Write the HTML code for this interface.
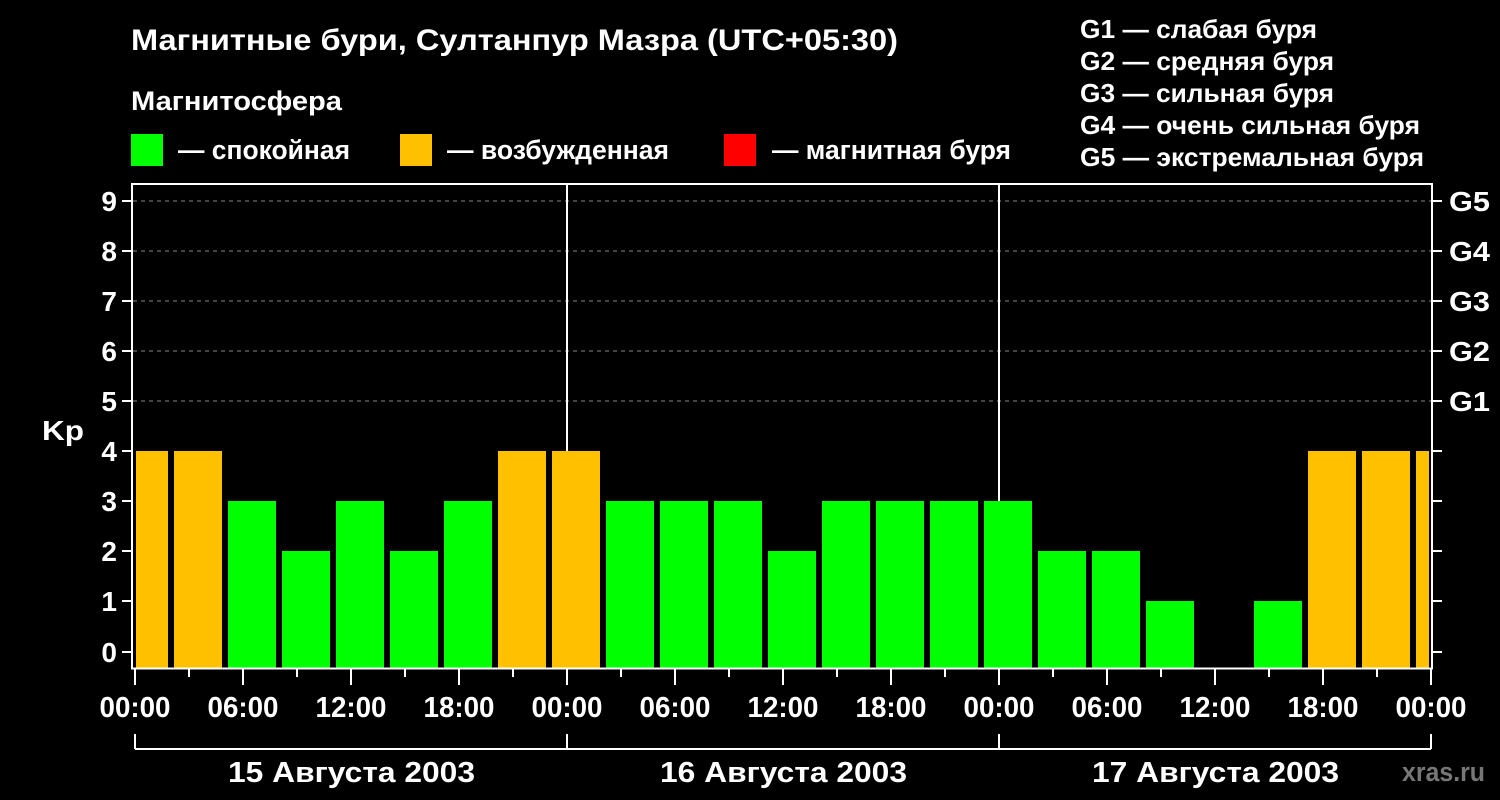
<!DOCTYPE html>
<html><head><meta charset="utf-8"><style>
html,body{margin:0;padding:0;background:#000;}
svg{display:block;font-family:"Liberation Sans",sans-serif;font-weight:bold;}
</style></head><body>
<svg width="1500" height="800" viewBox="0 0 1500 800" xmlns="http://www.w3.org/2000/svg">
<rect width="1500" height="800" fill="#000"/>
<g fill="#fff">
<text x="131" y="50" font-size="30" textLength="767" lengthAdjust="spacingAndGlyphs">Магнитные бури, Султанпур Мазра (UTC+05:30)</text>
<text x="131" y="110" font-size="27" textLength="211" lengthAdjust="spacingAndGlyphs">Магнитосфера</text>
<text x="178" y="159" font-size="27" textLength="172" lengthAdjust="spacingAndGlyphs">— спокойная</text>
<text x="447" y="159" font-size="27" textLength="222" lengthAdjust="spacingAndGlyphs">— возбужденная</text>
<text x="772" y="159" font-size="27" textLength="239" lengthAdjust="spacingAndGlyphs">— магнитная буря</text>
<text x="1080" y="38" font-size="26" textLength="237" lengthAdjust="spacingAndGlyphs">G1 — слабая буря</text>
<text x="1080" y="70" font-size="26" textLength="254" lengthAdjust="spacingAndGlyphs">G2 — средняя буря</text>
<text x="1080" y="102" font-size="26" textLength="254" lengthAdjust="spacingAndGlyphs">G3 — сильная буря</text>
<text x="1080" y="134" font-size="26" textLength="340" lengthAdjust="spacingAndGlyphs">G4 — очень сильная буря</text>
<text x="1080" y="166" font-size="26" textLength="344" lengthAdjust="spacingAndGlyphs">G5 — экстремальная буря</text>
</g>
<rect x="131" y="134" width="32" height="32" fill="#00ff00"/>
<rect x="400" y="134" width="32" height="32" fill="#ffc000"/>
<rect x="724" y="134" width="32" height="32" fill="#ff0000"/>
<g stroke="#888" stroke-width="1" stroke-dasharray="4,4">
<line x1="133" y1="201" x2="1431" y2="201"/><line x1="133" y1="251" x2="1431" y2="251"/>
<line x1="133" y1="301" x2="1431" y2="301"/><line x1="133" y1="351" x2="1431" y2="351"/>
<line x1="133" y1="401" x2="1431" y2="401"/>
</g>
<g id="bars">
<rect x="136" y="451" width="32" height="217" fill="#ffc000"/>
<rect x="174" y="451" width="48" height="217" fill="#ffc000"/>
<rect x="228" y="501" width="48" height="167" fill="#00ff00"/>
<rect x="282" y="551" width="48" height="117" fill="#00ff00"/>
<rect x="336" y="501" width="48" height="167" fill="#00ff00"/>
<rect x="390" y="551" width="48" height="117" fill="#00ff00"/>
<rect x="444" y="501" width="48" height="167" fill="#00ff00"/>
<rect x="498" y="451" width="48" height="217" fill="#ffc000"/>
<rect x="552" y="451" width="48" height="217" fill="#ffc000"/>
<rect x="606" y="501" width="48" height="167" fill="#00ff00"/>
<rect x="660" y="501" width="48" height="167" fill="#00ff00"/>
<rect x="714" y="501" width="48" height="167" fill="#00ff00"/>
<rect x="768" y="551" width="48" height="117" fill="#00ff00"/>
<rect x="822" y="501" width="48" height="167" fill="#00ff00"/>
<rect x="876" y="501" width="48" height="167" fill="#00ff00"/>
<rect x="930" y="501" width="48" height="167" fill="#00ff00"/>
<rect x="984" y="501" width="48" height="167" fill="#00ff00"/>
<rect x="1038" y="551" width="48" height="117" fill="#00ff00"/>
<rect x="1092" y="551" width="48" height="117" fill="#00ff00"/>
<rect x="1146" y="601" width="48" height="67" fill="#00ff00"/>
<rect x="1254" y="601" width="48" height="67" fill="#00ff00"/>
<rect x="1308" y="451" width="48" height="217" fill="#ffc000"/>
<rect x="1362" y="451" width="48" height="217" fill="#ffc000"/>
<rect x="1416" y="451" width="13" height="217" fill="#ffc000"/>
</g>
<g stroke="#fff" stroke-width="2" fill="none">
<polyline points="132,668 132,184 1432,184 1432,668"/>
<line x1="131" y1="668.5" x2="1433" y2="668.5"/>
<line x1="567" y1="183" x2="567" y2="451"/>
<line x1="999" y1="183" x2="999" y2="501"/>
<path d="M122 201h9M122 251h9M122 301h9M122 351h9M122 401h9M122 451h9M122 501h9M122 551h9M122 601h9M122 652h9"/>
<path d="M1433 201h9M1433 251h9M1433 301h9M1433 351h9M1433 401h9M1433 451h9M1433 501h9M1433 551h9M1433 601h9M1433 652h9"/>
<path d="M135 669v16M189 669v8M243 669v16M297 669v8M351 669v16M405 669v8M459 669v16M513 669v8M567 669v16M621 669v8M675 669v16M729 669v8M783 669v16M837 669v8M891 669v16M945 669v8M999 669v16M1053 669v8M1107 669v16M1161 669v8M1215 669v16M1269 669v8M1323 669v16M1377 669v8M1431 669v16"/>
<path d="M135 734v15M567 734v15M999 734v15M1431 734v15M135 749H1431"/>
</g>
<g fill="#fff" font-size="28" text-anchor="end">
<text x="117" y="211">9</text><text x="117" y="261">8</text><text x="117" y="311">7</text>
<text x="117" y="361">6</text><text x="117" y="411">5</text><text x="117" y="461">4</text>
<text x="117" y="511">3</text><text x="117" y="561">2</text><text x="117" y="611">1</text>
<text x="117" y="662">0</text>
</g>
<text x="42" y="440" fill="#fff" font-size="28" textLength="42" lengthAdjust="spacingAndGlyphs">Kp</text>
<g fill="#fff" font-size="28">
<text x="1449" y="211" textLength="41" lengthAdjust="spacingAndGlyphs">G5</text><text x="1449" y="261" textLength="41" lengthAdjust="spacingAndGlyphs">G4</text><text x="1449" y="311" textLength="41" lengthAdjust="spacingAndGlyphs">G3</text>
<text x="1449" y="361" textLength="41" lengthAdjust="spacingAndGlyphs">G2</text><text x="1449" y="411" textLength="41" lengthAdjust="spacingAndGlyphs">G1</text>
</g>
<g fill="#fff" font-size="29">
<text x="99.5" y="717" textLength="71" lengthAdjust="spacingAndGlyphs">00:00</text>
<text x="207.5" y="717" textLength="71" lengthAdjust="spacingAndGlyphs">06:00</text>
<text x="315.5" y="717" textLength="71" lengthAdjust="spacingAndGlyphs">12:00</text>
<text x="423.5" y="717" textLength="71" lengthAdjust="spacingAndGlyphs">18:00</text>
<text x="531.5" y="717" textLength="71" lengthAdjust="spacingAndGlyphs">00:00</text>
<text x="639.5" y="717" textLength="71" lengthAdjust="spacingAndGlyphs">06:00</text>
<text x="747.5" y="717" textLength="71" lengthAdjust="spacingAndGlyphs">12:00</text>
<text x="855.5" y="717" textLength="71" lengthAdjust="spacingAndGlyphs">18:00</text>
<text x="963.5" y="717" textLength="71" lengthAdjust="spacingAndGlyphs">00:00</text>
<text x="1071.5" y="717" textLength="71" lengthAdjust="spacingAndGlyphs">06:00</text>
<text x="1179.5" y="717" textLength="71" lengthAdjust="spacingAndGlyphs">12:00</text>
<text x="1287.5" y="717" textLength="71" lengthAdjust="spacingAndGlyphs">18:00</text>
<text x="1395.5" y="717" textLength="71" lengthAdjust="spacingAndGlyphs">00:00</text>
<text x="228" y="782" textLength="247" lengthAdjust="spacingAndGlyphs">15 Августа 2003</text>
<text x="660" y="782" textLength="247" lengthAdjust="spacingAndGlyphs">16 Августа 2003</text>
<text x="1092" y="782" textLength="247" lengthAdjust="spacingAndGlyphs">17 Августа 2003</text>
</g>
<text x="1485" y="781" fill="#777" font-size="27" text-anchor="end" textLength="83" lengthAdjust="spacingAndGlyphs">xras.ru</text>
</svg>
</body></html>
